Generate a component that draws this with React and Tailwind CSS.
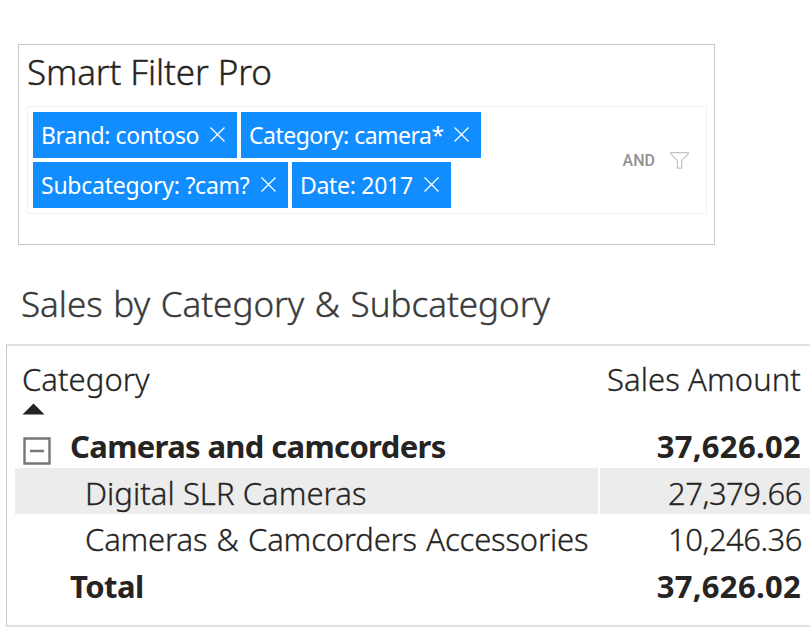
const tagRows = [
  [
    { text: "Brand: contoso", box: "w-[204px]", track: "tracking-[-0.4px]" },
    { text: "Category: camera*", box: "w-[240px]", track: "tracking-[-0.5px]" },
  ],
  [
    { text: "Subcategory: ?cam?", box: "w-[255px]", track: "tracking-[-0.25px]" },
    { text: "Date: 2017", box: "w-[159px]", track: "tracking-[-0.3px]" },
  ],
];

function Tag({ text, box, track }) {
  return (
    <div className={`flex h-[46px] items-center justify-between bg-[#118dff] pl-2 pr-3 text-white ${box}`}>
      <span className={`whitespace-nowrap text-[23px] leading-[44px] ${track}`}>{text}</span>
      <svg className="mb-[2px] h-[15px] w-[15px] shrink-0" viewBox="0 0 15 15" fill="none" stroke="currentColor" strokeWidth="1.3">
        <path d="M0.5 0.5 14.5 14.5M14.5 0.5 0.5 14.5" />
      </svg>
    </div>
  );
}

export default function App() {
  return (
    <div className="flex h-[630px] w-[810px] flex-col overflow-hidden bg-white font-['Noto_Sans','Open_Sans',sans-serif] text-[#252423]">
      <section className="ml-[18px] mt-11 h-[201px] w-[697px] shrink-0 border border-[#c8c8c8] pl-2">
        <h1 className="h-[61px] whitespace-nowrap text-[35px] font-light leading-[54px] tracking-[-0.1px] [-webkit-text-stroke:0.4px]">Smart Filter Pro</h1>
        <div className="flex h-[108px] w-[680px] items-center border border-[#f0f0f0] pl-[5px] pr-[17px]">
          <div className="flex flex-1 flex-col gap-1">
            {tagRows.map((row, i) => (
              <div key={i} className="flex gap-1">
                {row.map((tag) => (
                  <Tag key={tag.text} {...tag} />
                ))}
              </div>
            ))}
          </div>
          <span className="mr-[15px] pt-[1px] font-[Roboto,sans-serif] text-[16px] font-medium leading-5 text-[#919191]">AND</span>
          <svg className="h-[17px] w-[19px]" viewBox="0 0 19 17" fill="none" stroke="#c4c4c4" strokeWidth="1.2">
            <path d="M0.8 0.7H18.2V1.9L11.6 8.4V16.2H7.4V8.4L0.8 1.9Z" />
          </svg>
        </div>
      </section>

      <h2 className="ml-[21px] mt-[30px] h-[69px] shrink-0 whitespace-nowrap text-[35px] font-light leading-[58px] tracking-[0px] text-[#3a3a3a] [-webkit-text-stroke:0.4px] [word-spacing:1.5px]">
        Sales by Category &amp; Subcategory
      </h2>

      <section className="ml-[6px] flex h-[283px] w-[804px] shrink-0 flex-col border-y-2 border-l border-y-[#e1e1e1] border-l-[#c8c8c8] pl-2 text-[31px] font-light">
        <div className="flex h-[75px] shrink-0 justify-between pl-[7px] pr-[9px] [-webkit-text-stroke:0.3px]">
          <div>
            <div className="h-[57px] leading-[66px] tracking-[0.05px]">Category</div>
            <svg className="h-[12px] w-[23px]" viewBox="0 0 23 12">
              <path d="M11.5 0.5 22.5 11.5H0.5Z" fill="#252423" />
            </svg>
          </div>
          <div className="leading-[66px] tracking-[0.1px]">Sales Amount</div>
        </div>
        <div className="flex h-[47px] shrink-0 justify-between pl-2 pr-[9px] font-bold leading-[50px]">
          <div className="flex">
            <svg className="mt-[16px] h-[28px] w-[28px]" viewBox="0 0 28 28" fill="none" stroke="#777" strokeWidth="2.4">
              <path d="M1.5 1.5H26.5V26.5H1.5ZM7 14H21" />
            </svg>
            <span className="ml-[19px] whitespace-nowrap tracking-[-0.65px]">Cameras and camcorders</span>
          </div>
          <span className="tracking-[0.3px]">37,626.02</span>
        </div>
        <div className="flex h-[46px] shrink-0 gap-[2px] leading-[50px] [-webkit-text-stroke:0.3px]">
          <div className="w-[583px] whitespace-nowrap bg-[#ececec] pl-[70px] tracking-[0.05px]">Digital SLR Cameras</div>
          <div className="flex-1 bg-[#ececec] pr-[8px] text-right tracking-[-0.5px]">27,379.66</div>
        </div>
        <div className="flex h-[47px] shrink-0 justify-between pl-[70px] pr-[8px] leading-[50px] [-webkit-text-stroke:0.3px]">
          <span className="whitespace-nowrap tracking-[-0.18px] [word-spacing:1.5px]">Cameras &amp; Camcorders Accessories</span>
          <span className="tracking-[-0.5px]">10,246.36</span>
        </div>
        <div className="flex h-[46px] shrink-0 justify-between pl-[55px] pr-[9px] font-bold leading-[50px]">
          <span className="tracking-[-0.55px]">Total</span>
          <span className="tracking-[0.3px]">37,626.02</span>
        </div>
      </section>
    </div>
  );
}
